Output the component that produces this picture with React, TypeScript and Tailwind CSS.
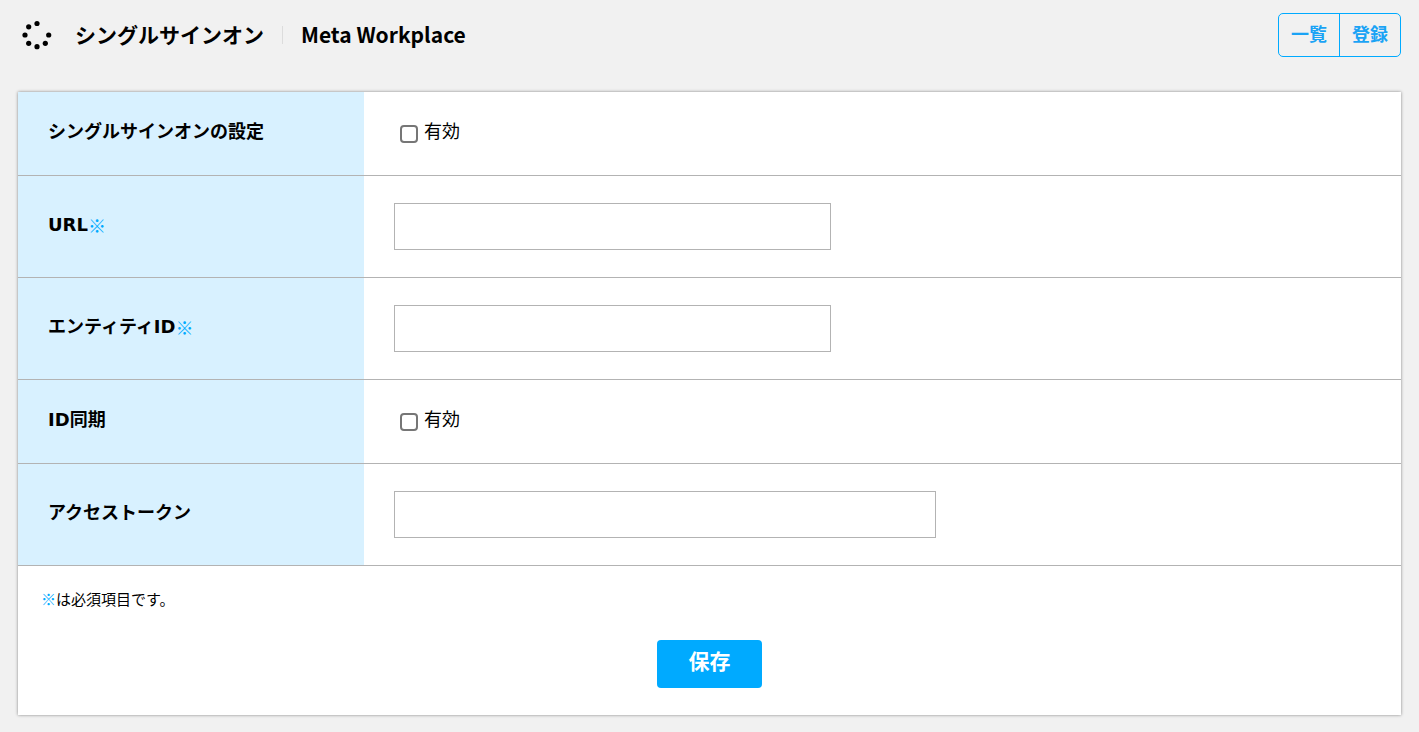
const font = "[font-family:'Noto_Sans_CJK_JP','Noto_Sans',sans-serif]";

function Logo() {
  const dots = [
    [19, 5.5],
    [10.7, 8.8],
    [7, 17],
    [10.7, 25.3],
    [19, 28.7],
    [27.3, 25.3],
    [30.7, 17],
  ];
  return (
    <svg width="36" height="36" viewBox="0 0 36 36" className="mt-[2px] shrink-0">
      {dots.map(([x, y]) => (
        <circle key={x + "-" + y} cx={x} cy={y} r="2.6" fill="#000" />
      ))}
    </svg>
  );
}

function Row({
  label,
  required,
  tall,
  children,
}: {
  label: string;
  required?: boolean;
  tall?: boolean;
  children: React.ReactNode;
}) {
  return (
    <div className={`flex border-b border-[#b3b3b3] ${tall ? "h-[102px]" : "h-[84px]"}`}>
      <div className="flex w-[346px] shrink-0 items-center bg-[#d8f1ff] pb-[3px] pl-[30px] text-[18px] font-bold leading-6 text-black [font-family:'DejaVu_Sans','Noto_Sans_CJK_JP',sans-serif]">
        {label}
        {required && (
          <span className="font-normal text-[#00aaff] [font-family:'Noto_Sans_CJK_JP',sans-serif]">※</span>
        )}
      </div>
      <div className="flex flex-1 items-center pl-[30px]">{children}</div>
    </div>
  );
}

function Check() {
  return (
    <label className="ml-[6px] flex items-center gap-[6px] text-[18px] leading-6 text-black">
      <span className="h-[18px] w-[18px] rounded-[4px] border-2 border-[#767676] bg-white" />
      <span className="-translate-y-[4px]">有効</span>
    </label>
  );
}

function TextBox({ wide }: { wide?: boolean }) {
  return (
    <input
      type="text"
      className={`h-[47px] border border-[#b3b3b3] bg-white ${wide ? "w-[542px]" : "w-[437px]"}`}
    />
  );
}

export default function App() {
  return (
    <div className={`${font} min-h-[732px] bg-[#f1f1f1] px-[18px] pb-[17px]`}>
      <header className="flex h-[92px] items-start justify-between">
        <div className="flex h-[70px] items-center">
          <Logo />
          <h1 className="ml-[21px] pb-[2px] text-[21px] font-semibold leading-7 text-black">シングルサインオン</h1>
          <span className="ml-[18px] h-[18px] w-px bg-[#dcdcdc]" />
          <span className="ml-[18px] pb-[2px] text-[21px] font-semibold leading-7 text-black">
            Meta Workplace
          </span>
        </div>
        <div className="mt-[13px] flex h-[44px] w-[123px] rounded-[5px] border border-[#00aaff] text-[18px] font-semibold text-[#1aa3f5]">
          <button className="w-[61px] border-r border-[#00aaff] pb-[3px]">一覧</button>
          <button className="flex-1 pb-[3px]">登録</button>
        </div>
      </header>

      <main className="bg-white shadow-[0_0_3px_rgba(0,0,0,0.45)]">
        <Row label="シングルサインオンの設定">
          <Check />
        </Row>
        <Row label="URL" required tall>
          <TextBox />
        </Row>
        <Row label="エンティティID" required tall>
          <TextBox />
        </Row>
        <Row label="ID同期">
          <Check />
        </Row>
        <Row label="アクセストークン" tall>
          <TextBox wide />
        </Row>
        <div className="h-[149px]">
          <p className="pl-[23px] pt-[23px] text-[15px] leading-5 text-black">
            <span className="text-[#00aaff]">※</span>は必須項目です。
          </p>
          <div className="mt-[31px] flex justify-center">
            <button className="h-12 w-[105px] rounded-[4px] bg-[#00aaff] pb-[6px] text-[21px] font-bold text-white">
              保存
            </button>
          </div>
        </div>
      </main>
    </div>
  );
}
